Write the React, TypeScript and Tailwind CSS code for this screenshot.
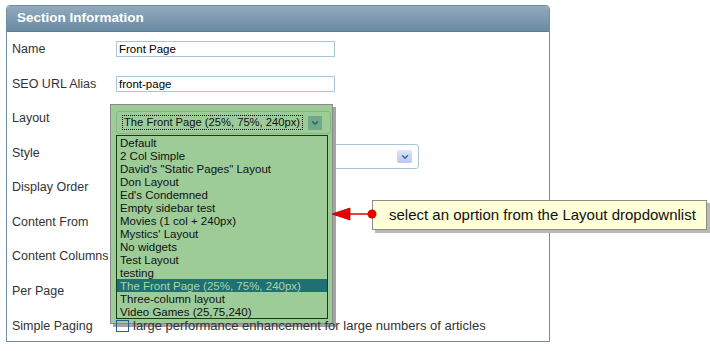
import { ChevronDown } from "lucide-react";

const layouts = [
  "Default",
  "2 Col Simple",
  'David\'s "Static Pages" Layout',
  "Don Layout",
  "Ed's Condemned",
  "Empty sidebar test",
  "Movies (1 col + 240px)",
  "Mystics' Layout",
  "No widgets",
  "Test Layout",
  "testing",
  "The Front Page (25%, 75%, 240px)",
  "Three-column layout",
  "Video Games (25,75,240)",
];

const selected = "The Front Page (25%, 75%, 240px)";

function Row({ label, children }: { label: string; children?: React.ReactNode }) {
  return (
    <div className="flex items-center h-[34.6px]">
      <div className="w-[104px] shrink-0 whitespace-nowrap">{label}</div>
      <div className="flex items-center">{children}</div>
    </div>
  );
}

function TextBox({ value }: { value: string }) {
  return (
    <div className="w-[219px] h-[16px] border border-[#a8c8d8] px-[2px] text-[11.5px] leading-[14px] text-black">
      {value}
    </div>
  );
}

export default function App() {
  return (
    <div
      className="relative w-[710px] h-[351px] bg-white overflow-hidden text-[12.5px] text-[#333]"
      style={{ fontFamily: '"Liberation Sans", Arial, sans-serif' }}
    >
      {/* Panel */}
      <div className="ml-[6px] mt-[5px] w-[544px] h-[337px] border border-[#6f8ea5] rounded-t-[4px] flex flex-col">
        <div className="h-[26px] shrink-0 bg-gradient-to-b from-[#91aabd] to-[#6a8ba4] border-b border-[#5f7f97] flex items-center pl-[10px] rounded-t-[3px]">
          <span className="text-white font-bold text-[13.5px]">Section Information</span>
        </div>
        <div className="pl-[5px] flex flex-col">
          <Row label="Name">
            <TextBox value="Front Page" />
          </Row>
          <Row label="SEO URL Alias">
            <TextBox value="front-page" />
          </Row>
          <Row label="Layout" />
          <Row label="Style">
            <div className="mt-[7px] w-[303px] h-[25px] border border-[#a8c8d8] rounded-[3px] flex items-center justify-end pr-[6px]">
              <div className="w-[15px] h-[13px] rounded-[2px] bg-gradient-to-b from-[#dde6fb] to-[#b6c8f2] flex items-center justify-center">
                <ChevronDown size={10} strokeWidth={3.5} className="text-[#4d6185]" />
              </div>
            </div>
          </Row>
          <Row label="Display Order" />
          <Row label="Content From" />
          <Row label="Content Columns" />
          <Row label="Per Page" />
          <Row label="Simple Paging">
            <div className="relative z-20 flex items-center gap-[4px]">
              <div className="w-[13px] h-[12px] border border-[#2b5d8c] bg-transparent" />
              <span className="text-[13px]">large performance enhancement for large numbers of articles</span>
            </div>
          </Row>
        </div>
      </div>

      {/* Open layout dropdown */}
      <div className="absolute left-[110px] top-[104px] w-[223px] h-[220px] z-10 bg-[#9dcc99] border border-[#8a8a8a] shadow-[3px_3px_0_#a4a4a4] pl-[5px] pr-[1px] pt-[6px]">
        <div className="h-[23px] border border-[#86b884] rounded-[3px] flex items-center pl-[5px] gap-[5px]">
          <div className="w-[181px] h-[15px] border border-dotted border-black pl-[1px] text-[11.2px] leading-[13px] text-[#111] whitespace-nowrap overflow-hidden">
            {selected}
          </div>
          <div className="w-[14px] h-[14px] bg-[#6fa88c] flex items-center justify-center">
            <ChevronDown size={10} strokeWidth={3.5} className="text-[#2c6656]" />
          </div>
        </div>
        <div className="mt-[1px] mr-[3px] h-[184px] border border-[#0f3d14] text-[11.5px] leading-[15px] text-[#111]">
          {layouts.map((item) => (
            <div
              key={item}
              className={`h-[13px] pl-[3px] whitespace-nowrap ${item === selected ? "bg-[#1f6f73] text-[#a9d6a5]" : ""}`}
            >
              {item}
            </div>
          ))}
        </div>
      </div>

      {/* Callout */}
      <svg className="absolute left-[330px] top-[204px] z-20" width="50" height="20" viewBox="0 0 50 20">
        <line x1="18" y1="10" x2="42" y2="10" stroke="#e00000" strokeWidth="1.5" />
        <polygon points="2,10 20,4 20,16" fill="#e80000" stroke="#b00000" strokeWidth="0.8" />
        <circle cx="42" cy="10" r="4.5" fill="#e80000" />
      </svg>
      <div className="absolute left-[372px] top-[200px] w-[335px] h-[30px] z-10 bg-[#ffffd8] border border-[#8c8c8c] shadow-[3px_3px_0_#b8b8b8] flex items-center pl-[16px] text-[15px] text-[#111]">
        select an oprtion from the Layout dropdownlist
      </div>
    </div>
  );
}
